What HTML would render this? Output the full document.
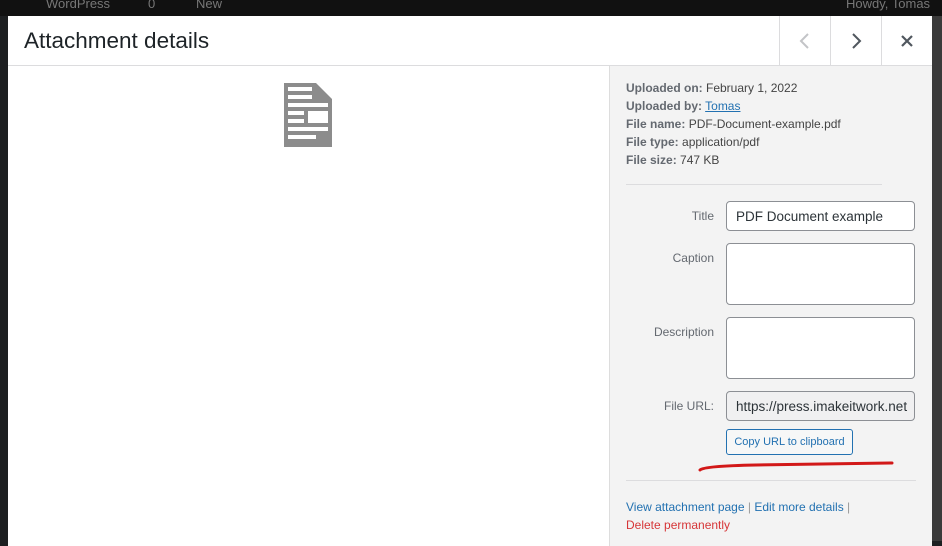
<!DOCTYPE html>
<html><head><style>
*{margin:0;padding:0;box-sizing:border-box}
body{width:942px;height:541px;overflow:hidden;background:#1d1f21;font-family:"Liberation Sans",sans-serif;position:relative}
.a{position:absolute}
.bar{left:0;top:0;width:942px;height:16px;background:#111;color:#777;font-size:13px}
.modal{left:8px;top:16px;width:924px;height:530px;background:#fff}
.side{left:601px;top:50px;width:323px;height:480px;background:#f3f3f3;border-left:1px solid #ddd}
.meta{font-size:12px;color:#444;line-height:18px}
.meta b{color:#646970;font-weight:bold}
.lbl{font-size:12px;color:#646970;text-align:right;width:90px}
.inp{background:#fff;border:1px solid #8c8f94;border-radius:4px}
</style></head><body>
<div class="a bar"><span class="a" style="left:46px;top:-4px">WordPress</span><span class="a" style="left:148px;top:-4px">0</span><span class="a" style="left:196px;top:-4px">New</span><span class="a" style="left:846px;top:-4px">Howdy, Tomas</span></div>
<div class="a" style="left:932px;top:16px;width:10px;height:525px;background:#3a3a3a"></div>
<div class="a modal">
 <div class="a" style="left:16px;top:12px;font-size:22.5px;color:#1d2327">Attachment details</div>
 <div class="a" style="left:0;top:49px;width:924px;height:1px;background:#dcdcde"></div>
 <div class="a" style="left:771px;top:0;width:1px;height:50px;background:#dcdcde"></div>
 <div class="a" style="left:822px;top:0;width:1px;height:50px;background:#dcdcde"></div>
 <div class="a" style="left:873px;top:0;width:1px;height:50px;background:#dcdcde"></div>
 <svg class="a" style="left:790px;top:17px" width="14" height="16"><path d="M10 1L3 8l7 7" stroke="#c3c4c7" stroke-width="2" fill="none"/></svg>
 <svg class="a" style="left:841px;top:17px" width="14" height="16"><path d="M4 1l7 7-7 7" stroke="#50575e" stroke-width="2" fill="none"/></svg>
 <svg class="a" style="left:892px;top:18px" width="14" height="14"><path d="M2 2l10 10M12 2L2 12" stroke="#50575e" stroke-width="2.2"/></svg>
 <svg class="a" style="left:276px;top:67px" width="49" height="64"><path d="M0 0h32l16 16v48H0z" fill="#8c8c8c"/><g fill="#fff"><rect x="4" y="4" width="24" height="4"/><rect x="4" y="12" width="24" height="4"/><rect x="4" y="20" width="40" height="4"/><rect x="4" y="28" width="16" height="4"/><rect x="24" y="28" width="20" height="12"/><rect x="4" y="36" width="16" height="4"/><rect x="4" y="44" width="40" height="4"/><rect x="4" y="52" width="28" height="4"/></g></svg>
 <div class="a side">
  <div class="a meta" style="left:16px;top:13px"><b>Uploaded on:</b> February 1, 2022<br><b>Uploaded by:</b> <span style="color:#2271b1;text-decoration:underline">Tomas</span><br><b>File name:</b> PDF-Document-example.pdf<br><b>File type:</b> application/pdf<br><b>File size:</b> 747 KB</div>
  <div class="a" style="left:16px;top:118px;width:256px;height:1px;background:#dcdcde"></div>
  <div class="a lbl" style="left:14px;top:143px">Title</div>
  <div class="a inp" style="left:116px;top:135px;width:189px;height:30px;font-size:13.5px;color:#2c3338;padding:7px 9px">PDF Document example</div>
  <div class="a lbl" style="left:14px;top:185px">Caption</div>
  <div class="a inp" style="left:116px;top:177px;width:189px;height:62px"></div>
  <div class="a lbl" style="left:14px;top:259px">Description</div>
  <div class="a inp" style="left:116px;top:251px;width:189px;height:62px"></div>
  <div class="a lbl" style="left:14px;top:333px">File URL:</div>
  <div class="a inp" style="left:116px;top:325px;width:189px;height:30px;background:#f0f0f1;font-size:13.5px;color:#2c3338;padding:7px 9px;white-space:nowrap;overflow:hidden">https://press.imakeitwork.net</div>
  <div class="a" style="left:116px;top:363px;width:127px;height:26px;border:1px solid #2271b1;border-radius:3px;background:#f6f7f7;color:#2271b1;font-size:11px;text-align:center;line-height:24px">Copy URL to clipboard</div>
  <svg class="a" style="left:86px;top:392px" width="200" height="16"><path d="M4 12 Q8 8 60 7 L196 5" stroke="#d21818" stroke-width="3" fill="none" stroke-linecap="round"/></svg>
  <div class="a" style="left:16px;top:414px;width:290px;height:1px;background:#dcdcde"></div>
  <div class="a" style="left:16px;top:432px;font-size:12px;line-height:18px;color:#2271b1">View attachment page <span style="color:#999">|</span> Edit more details <span style="color:#999">|</span><br><span style="color:#d63638">Delete permanently</span></div>
 </div>
</div>
</body></html>
